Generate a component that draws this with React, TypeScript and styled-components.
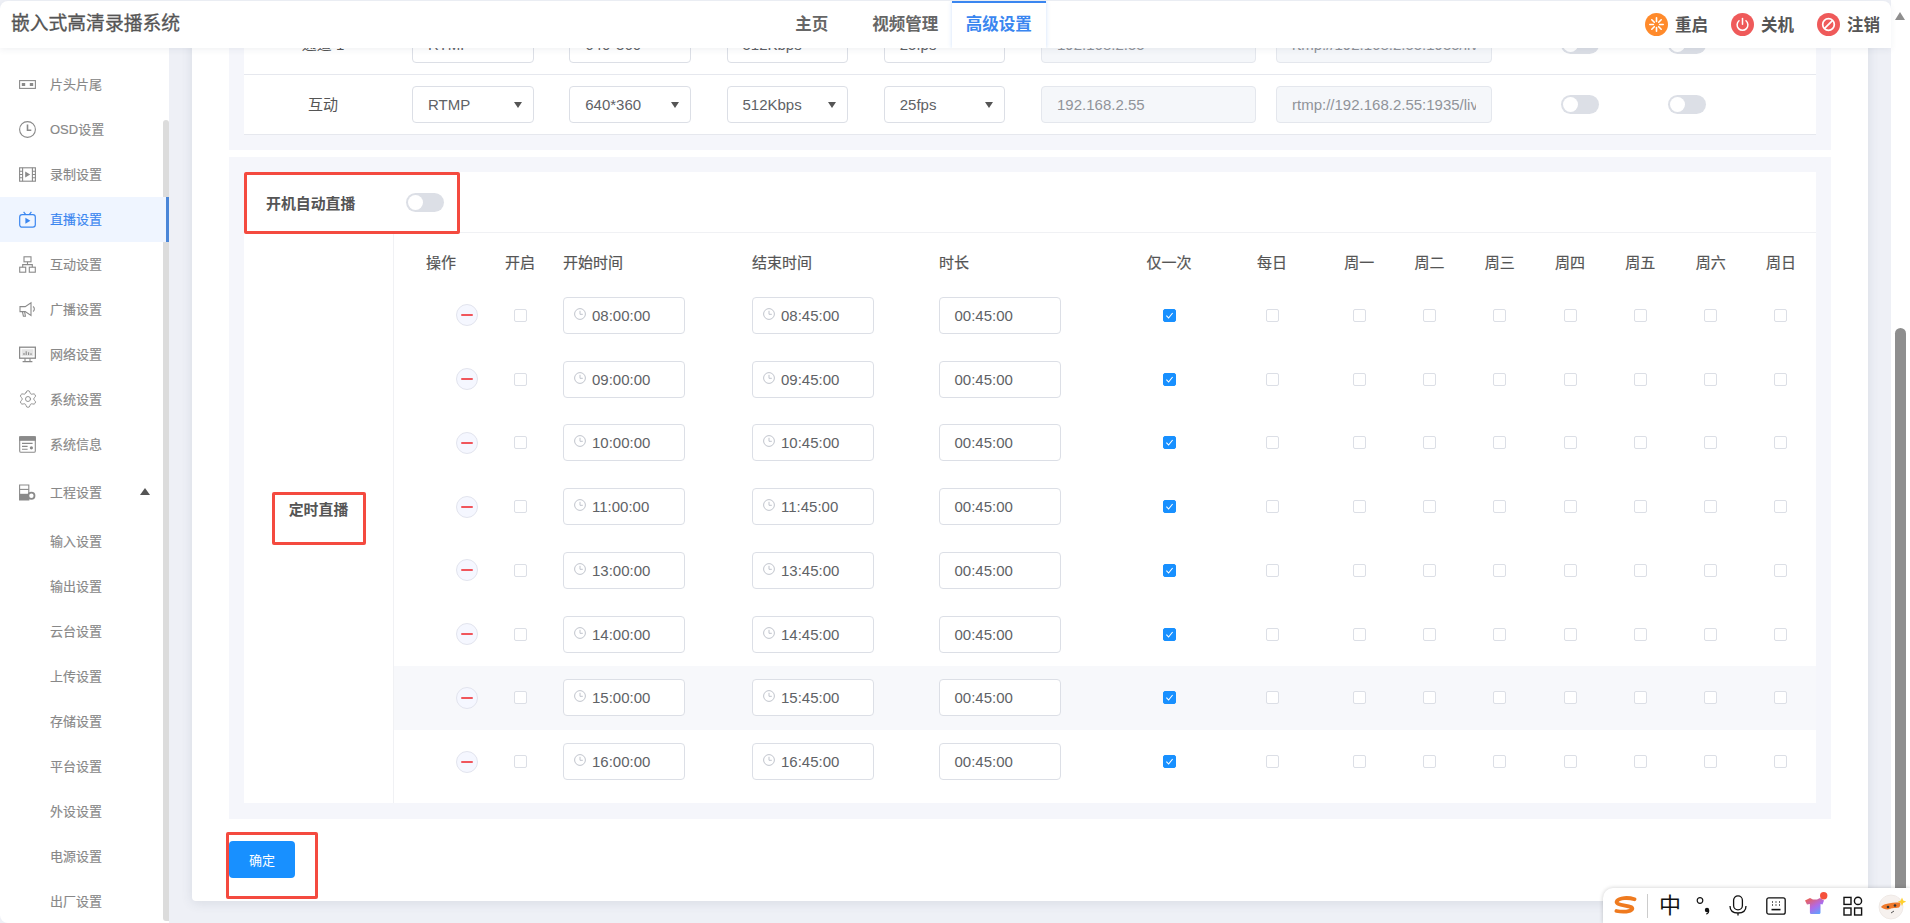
import { Settings } from 'lucide-react';
import { createGlobalStyle, styled } from 'styled-components';

const FONT = '"Liberation Sans", "Noto Sans CJK SC", sans-serif';

const GlobalStyle = createGlobalStyle`
  html, body {
    margin: 0;
    height: 100%;
    overflow: hidden;
    background: #eef0f6;
    font-family: ${FONT};
  }
  * { box-sizing: border-box; }
`;

const Page = styled.div`
  display: flex;
  height: 923px;
  overflow: hidden;
  position: relative;
`;

const Shell = styled.div`
  flex: 1;
  min-width: 0;
  display: flex;
  flex-direction: column;
`;

const PageScrollbar = styled.div`
  width: 19px;
  background: #fff;
  display: flex;
  flex-direction: column;
  padding-left: 4px;
`;

const ScrollArrow = styled.div`
  width: 0;
  height: 0;
  margin-top: 12px;
  border-left: 5.5px solid transparent;
  border-right: 5.5px solid transparent;
  border-bottom: 8px solid #8e8e8e;
`;

const ScrollThumb = styled.div`
  width: 11px;
  flex: 1;
  margin-top: 308px;
  background: #8e8e8e;
  border-radius: 6px 6px 0 0;
`;

const Header = styled.header`
  position: relative;
  z-index: 3;
  height: 47px;
  margin-top: 1px;
  flex-shrink: 0;
  display: flex;
  align-items: stretch;
  padding: 0 11px;
  background: #fff;
  border-radius: 8px 8px 0 0;
  box-shadow: 0 2px 6px rgba(60, 70, 100, 0.07);
`;

const Title = styled.h1`
  margin: 0;
  width: 754px;
  font-size: 18.8px;
  line-height: 46px;
  font-weight: 400;
  color: #555;
  white-space: nowrap;
  -webkit-text-stroke: 0.3px #555;
`;

const Nav = styled.nav`
  display: flex;
`;

const Tab = styled.a<{ $active?: boolean }>`
  width: 93.5px;
  text-align: center;
  font-size: 16.5px;
  font-weight: 700;
  line-height: 42px;
  color: ${(p) => (p.$active ? '#3a86f0' : '#666')};
  border-top: 2px solid ${(p) => (p.$active ? '#3a86f0' : 'transparent')};
  box-shadow: ${(p) => (p.$active ? '0 0 4px rgba(58, 134, 240, 0.25)' : 'none')};
  clip-path: inset(0 -6px 0 -6px);
`;

const Actions = styled.div`
  margin-left: auto;
  display: flex;
  align-items: center;
  gap: 23px;
`;

const Action = styled.a`
  display: flex;
  align-items: center;
  gap: 7px;
  font-size: 16.5px;
  font-weight: 700;
  color: #555;
`;

const ActionLabel = styled.span`
  margin-top: -2px;
`;

const Body = styled.div`
  flex: 1;
  min-height: 0;
  display: flex;
`;

const Sidebar = styled.aside`
  position: relative;
  width: 169px;
  flex-shrink: 0;
  padding-top: 13.5px;
  background: #fff;
  border-radius: 0 0 0 8px;
`;

const SidebarThumb = styled.div`
  position: absolute;
  top: 72px;
  right: 0;
  bottom: 2px;
  width: 6px;
  background: #dcdcdc;
  border-radius: 3px 3px 0 3px;
`;

const MenuItem = styled.a<{ $active?: boolean; $sub?: boolean; $tall?: boolean }>`
  position: relative;
  display: flex;
  align-items: center;
  gap: 14px;
  height: ${(p) => (p.$tall ? '52px' : '45px')};
  padding-left: ${(p) => (p.$sub ? '50px' : '19px')};
  font-size: 13px;
  color: ${(p) => (p.$active ? '#3a86f0' : '#888')};
  background: ${(p) => (p.$active ? '#eff5ff' : 'transparent')};
  border-right: ${(p) => (p.$active ? '3px solid #4a86d8' : 'none')};
  -webkit-text-stroke: 0.15px currentColor;
`;

const MenuLabel = styled.span`
  margin-top: -2px;
`;

const GearIcon = styled(Settings)`
  flex-shrink: 0;
  margin: 0 -1.5px;
`;

const MenuCaret = styled.span`
  width: 0;
  height: 0;
  margin-left: 24px;
  margin-top: -2px;
  border-left: 5px solid transparent;
  border-right: 5px solid transparent;
  border-bottom: 7px solid #555;
`;

const Main = styled.main`
  flex: 1;
  min-width: 0;
  padding: 0 23px;
  overflow: hidden;
`;

/* the page is scrolled: the first row slides under the header */
const Card = styled.section`
  margin-top: -33px;
  padding: 0 37px 23px;
  background: #fff;
  border-radius: 0 0 4px 4px;
  box-shadow: 0 2px 12px rgba(60, 70, 100, 0.12);
`;

const Panel = styled.div<{ $top: number; $bottom: number }>`
  padding: ${(p) => p.$top}px 15px ${(p) => p.$bottom}px;
  margin-bottom: 7px;
  background: #f5f6fb;
`;

const ChannelRow = styled.div`
  display: grid;
  grid-template-columns: 168px repeat(4, 157.25px) 235px 285px 107px 1fr;
  align-items: center;
  height: 60px;
  background: #fff;
  border-bottom: 1px solid #e6e8ee;
`;

const ChannelName = styled.div`
  width: 158px;
  padding-bottom: 2px;
  text-align: center;
  font-size: 15px;
  color: #555;
`;

const Select = styled.div`
  position: relative;
  width: 121.5px;
  height: 37px;
  padding-left: 15px;
  font-size: 15px;
  line-height: 35px;
  color: #606266;
  background: #fff;
  border: 1px solid #dcdfe6;
  border-radius: 4px;

  &::after {
    content: '';
    position: absolute;
    right: 11px;
    top: 15px;
    border-left: 4px solid transparent;
    border-right: 4px solid transparent;
    border-top: 6px solid #555;
  }
`;

const ReadOnlyInput = styled.input<{ $width: number }>`
  width: ${(p) => p.$width}px;
  height: 37px;
  padding: 0 15px;
  font: 15px ${FONT};
  color: #909399;
  background: #f5f7fa;
  border: 1px solid #e4e7ed;
  border-radius: 4px;
  outline: none;
`;

const Toggle = styled.span`
  position: relative;
  display: block;
  width: 38px;
  height: 19px;
  background: #dcdfe6;
  border-radius: 10px;

  &::after {
    content: '';
    position: absolute;
    left: 2px;
    top: 2px;
    width: 15px;
    height: 15px;
    background: #fff;
    border-radius: 50%;
  }
`;

const ScheduleBox = styled.div`
  background: #fff;
`;

const AutoRow = styled.div`
  height: 61px;
  border-bottom: 1px solid #f0f1f4;
`;

const AutoFrame = styled.div`
  display: flex;
  align-items: center;
  justify-content: space-between;
  position: relative;
  width: 216px;
  height: 62px;
  padding: 0 13px 1px 19px;
  font-size: 14.9px;
  font-weight: 700;
  color: #555;
  border: 3px solid #f44a3f;
  border-radius: 2px;
`;

const ScheduleBody = styled.div`
  display: flex;
`;

const ScheduleLabel = styled.div`
  width: 150px;
  flex-shrink: 0;
  display: flex;
  align-items: center;
  justify-content: center;
  padding: 2px 0 0 0;
  border-right: 1px solid #f0f1f4;
`;

const LabelFrame = styled.div`
  width: 94px;
  height: 53px;
  padding-top: 3px;
  text-align: center;
  font-size: 14.9px;
  font-weight: 700;
  line-height: 24px;
  color: #555;
  border: 3px solid #f44a3f;
  border-radius: 2px;
`;

const Table = styled.div`
  flex: 1;
  min-width: 0;
  padding-bottom: 9px;
`;

const COLUMNS = '94px 64px 189px 187px 190px 102px 104px repeat(7, 70.3px)';

const HeadRow = styled.div`
  display: grid;
  grid-template-columns: ${COLUMNS};
  align-items: center;
  height: 50.5px;
  padding-top: 6px;
`;

const HeadCell = styled.div<{ $left?: boolean }>`
  font-size: 15px;
  color: #555;
  text-align: ${(p) => (p.$left ? 'left' : 'center')};
  padding-left: ${(p) => (p.$left ? '11px' : '0')};
  -webkit-text-stroke: 0.2px #555;
`;

const TimeRow = styled.div<{ $hover?: boolean }>`
  display: grid;
  grid-template-columns: ${COLUMNS};
  align-items: center;
  justify-items: center;
  height: 63.75px;
  background: ${(p) => (p.$hover ? '#f7f8fb' : 'transparent')};
`;

const RemoveButton = styled.button`
  justify-self: start;
  display: flex;
  align-items: center;
  justify-content: center;
  width: 22px;
  height: 22px;
  margin-left: 62px;
  padding: 0;
  background: #f5f7ff;
  border: 1px solid #e2e4ee;
  border-radius: 50%;

  &::before {
    content: '';
    width: 12px;
    height: 2px;
    background: #f0565c;
    border-radius: 1px;
  }
`;

const Check = styled.span<{ $on?: boolean }>`
  display: flex;
  align-items: center;
  justify-content: center;
  width: 13px;
  height: 13px;
  background: ${(p) => (p.$on ? '#1890ff' : '#fff')};
  border: 1px solid ${(p) => (p.$on ? '#1890ff' : '#dcdfe6')};
  border-radius: 2px;
`;

const TimeField = styled.div<{ $plain?: boolean }>`
  justify-self: start;
  display: flex;
  align-items: center;
  gap: 6px;
  width: 121.5px;
  height: 37px;
  margin-left: 11px;
  padding-left: ${(p) => (p.$plain ? '14.5px' : '10px')};
  font-size: 15px;
  color: #606266;
  background: #fff;
  border: 1px solid #dcdfe6;
  border-radius: 4px;

  svg {
    margin-top: -3px;
  }
`;

const Footer = styled.div`
  padding-top: 15.5px;
`;

const SubmitWrap = styled.div`
  position: relative;
  width: 66px;
`;

const SubmitButton = styled.button`
  display: block;
  width: 66px;
  height: 37px;
  padding: 0;
  font: 13px ${FONT};
  color: #fff;
  background: #1890ff;
  border: none;
  border-radius: 4px;
`;

const Highlight = styled.div`
  position: absolute;
  left: -3px;
  top: -9px;
  width: 92px;
  height: 67px;
  border: 3px solid #f44a3f;
  border-radius: 2px;
  pointer-events: none;
`;

const ImeBar = styled.div`
  position: absolute;
  right: 0;
  bottom: 0;
  z-index: 5;
  display: grid;
  grid-template-columns: 23px 20px 26px 40px 29px 48px 32px 41px 37px;
  align-items: center;
  justify-items: center;
  width: 307px;
  height: 35px;
  padding-left: 11px;
  background: #fff;
  border-radius: 10px 0 0 0;
  box-shadow: 0 0 4px rgba(0, 0, 0, 0.2);
`;

const ImeDivider = styled.span`
  width: 1px;
  height: 24px;
  background: #ccc;
`;

const ImeChar = styled.span`
  font-size: 22px;
  line-height: 1;
  color: #111;
`;

const MENU_GREY = '#8a8a8a';

function Svg({ children, size = 17, color = MENU_GREY }: { children: React.ReactNode; size?: number; color?: string }) {
  return (
    <svg width={size} height={size} viewBox="0 0 17 17" fill="none" stroke={color} strokeWidth="1.1" style={{ flexShrink: 0 }}>
      {children}
    </svg>
  );
}

const menuIcons: Record<string, React.ReactNode> = {
  title: (
    <Svg>
      <rect x="0.6" y="4.6" width="15.8" height="7.8" />
      <rect x="2.8" y="7" width="3.4" height="3" fill={MENU_GREY} stroke="none" />
      <rect x="10.8" y="7" width="3.4" height="3" fill={MENU_GREY} stroke="none" />
    </Svg>
  ),
  osd: (
    <Svg>
      <circle cx="8.5" cy="8.5" r="7.9" />
      <path d="M8.5 3.6v5.6h3.8" strokeWidth="1.6" />
    </Svg>
  ),
  record: (
    <Svg>
      <rect x="0.6" y="1.8" width="15.8" height="13.4" />
      <path d="M3.6 1.8v13.4M13.4 1.8v13.4M0.6 5.2h3M0.6 8.5h3M0.6 11.8h3M13.4 5.2h3M13.4 8.5h3M13.4 11.8h3" />
      <path d="M6.2 5.6v5.8l5-2.9z" fill={MENU_GREY} stroke="none" />
    </Svg>
  ),
  live: (
    <Svg color="#3a86f0">
      <rect x="0.7" y="3.6" width="15.6" height="12.6" rx="2.4" strokeWidth="1.2" />
      <path d="M4.6 0.8l2 2.6M12.4 0.8l-2 2.6" strokeWidth="1.2" />
      <path d="M6.4 6.8v6l5-3z" fill="#3a86f0" stroke="none" />
    </Svg>
  ),
  interact: (
    <Svg>
      <rect x="5" y="0.8" width="7" height="5" />
      <rect x="0.7" y="11.2" width="6" height="5" />
      <rect x="10.3" y="11.2" width="6" height="5" />
      <path d="M8.5 5.8v2.8M3.7 11.2V8.6h9.6v2.6" />
    </Svg>
  ),
  broadcast: (
    <Svg>
      <path d="M1 5.6h5.2L12 1.8v12.6L6.2 10.6H1z" />
      <path d="M3.4 10.6l1 4.6h2l-.8-4.6M14 5.6c1.8 1 1.8 4 0 5" />
    </Svg>
  ),
  network: (
    <Svg>
      <rect x="0.6" y="1.2" width="15.8" height="11" strokeWidth="1.3" />
      <rect x="2.6" y="3.2" width="11.8" height="7" fill="#e4e4e4" stroke="none" />
      <path d="M5 9V7M7.2 9V5.2M9.6 9V6.2M12 9V7.2" />
      <path d="M6 12.2v3M11 12.2v3M3.6 15.6h9.8" />
    </Svg>
  ),
  info: (
    <Svg>
      <rect x="0.7" y="0.7" width="15.6" height="15.6" rx="1.4" />
      <path d="M0.7 0.7h15.6v3.6H0.7z" fill={MENU_GREY} />
      <path d="M3 7.4h10.6M3 10.4h5.6M3 13.2h5.6" />
      <circle cx="12.4" cy="11.8" r="1.6" fill={MENU_GREY} stroke="none" />
    </Svg>
  ),
  project: (
    <Svg>
      <path d="M0.6 1h9.2v15H0.6z" fill="#fff" />
      <path d="M0.6 5.4h9.2" />
      <path d="M0.6 9.8h9.2V16H0.6z" fill={MENU_GREY} stroke="none" />
      <circle cx="12.4" cy="11.8" r="3.1" fill="#fff" strokeWidth="1.8" stroke={MENU_GREY} />
    </Svg>
  ),
};

const MENU: { icon?: string; label: string; active?: boolean }[] = [
  { icon: 'title', label: '片头片尾' },
  { icon: 'osd', label: 'OSD设置' },
  { icon: 'record', label: '录制设置' },
  { icon: 'live', label: '直播设置', active: true },
  { icon: 'interact', label: '互动设置' },
  { icon: 'broadcast', label: '广播设置' },
  { icon: 'network', label: '网络设置' },
  { icon: 'gear', label: '系统设置' },
  { icon: 'info', label: '系统信息' },
];

const SUB_MENU = ['输入设置', '输出设置', '云台设置', '上传设置', '存储设置', '平台设置', '外设设置', '电源设置', '出厂设置'];

const CHANNELS = ['通道 1', '互动'];

const SCHEDULE = [
  ['08:00:00', '08:45:00'],
  ['09:00:00', '09:45:00'],
  ['10:00:00', '10:45:00'],
  ['11:00:00', '11:45:00'],
  ['13:00:00', '13:45:00'],
  ['14:00:00', '14:45:00'],
  ['15:00:00', '15:45:00'],
  ['16:00:00', '16:45:00'],
];

const DAYS = ['每日', '周一', '周二', '周三', '周四', '周五', '周六', '周日'];

function RestartIcon() {
  return (
    <svg width="23" height="23" viewBox="0 0 23 23">
      <circle cx="11.5" cy="11.5" r="11.5" fill="#ff8a2b" />
      <path
        d="M11.5 4.8v3.6M11.5 14.6v3.6M4.8 11.5h3.6M14.6 11.5h3.6M6.8 6.8l2.5 2.5M13.7 13.7l2.5 2.5M16.2 6.8l-2.5 2.5M9.3 13.7l-2.5 2.5"
        stroke="#fff"
        strokeWidth="1.6"
        strokeLinecap="round"
      />
    </svg>
  );
}

function PowerIcon() {
  return (
    <svg width="23" height="23" viewBox="0 0 23 23" fill="none">
      <circle cx="11.5" cy="11.5" r="11.5" fill="#ef5a5a" />
      <path d="M8 7.8a5.4 5.4 0 1 0 7 0" stroke="#fff" strokeWidth="1.5" strokeLinecap="round" />
      <path d="M11.5 5.6v5.6" stroke="#fff" strokeWidth="1.5" strokeLinecap="round" />
    </svg>
  );
}

function BanIcon() {
  return (
    <svg width="23" height="23" viewBox="0 0 23 23" fill="none">
      <circle cx="11.5" cy="11.5" r="11.5" fill="#ef5a5a" />
      <circle cx="11.5" cy="11.5" r="5.8" stroke="#fff" strokeWidth="1.7" />
      <path d="M7.6 15.4l7.8-7.8" stroke="#fff" strokeWidth="1.7" />
    </svg>
  );
}

function ClockIcon() {
  return (
    <svg width="12" height="12" viewBox="0 0 12 12" fill="none" stroke="#c0c4cc" strokeWidth="1">
      <circle cx="6" cy="6" r="5.4" />
      <path d="M6 2.8v3.5h2.8" />
    </svg>
  );
}

function CheckMark() {
  return (
    <svg width="9" height="9" viewBox="0 0 9 9" fill="none" stroke="#fff" strokeWidth="1.1">
      <path d="M1.4 4.6l2.2 2.4 4-5" />
    </svg>
  );
}

function ImeLogo() {
  return (
    <svg width="23" height="20" viewBox="0 0 23 20" fill="none">
      <path
        d="M20.5 3.2C14 1.2 5.5 1.6 3 5c-1.6 2.4 2 3.6 8 4.6 5 .9 8.4 1.8 7 3.8-1.6 2.2-8.4 3-15.6 1.6"
        stroke="#ef7a1f"
        strokeWidth="3.8"
        strokeLinecap="round"
      />
    </svg>
  );
}

function ImePunct() {
  return (
    <svg width="15" height="19" viewBox="0 0 15 19" fill="none">
      <circle cx="4" cy="4.5" r="2.8" stroke="#111" strokeWidth="1.2" />
      <circle cx="11" cy="14" r="2.2" fill="#111" />
      <path d="M12.8 14.4c0 1.6-.8 3-2.4 3.8" stroke="#111" strokeWidth="1.3" />
    </svg>
  );
}

function ImeMic() {
  return (
    <svg width="18" height="21" viewBox="0 0 18 21" fill="none" stroke="#111" strokeWidth="1.3">
      <rect x="4.6" y="0.8" width="8.8" height="14" rx="4.4" />
      <path d="M1 11c0 4.6 3.4 7 8 7s8-2.4 8-7M9 18v2.4" />
    </svg>
  );
}

function ImeKeyboard() {
  return (
    <svg width="20" height="18" viewBox="0 0 20 18" fill="none">
      <rect x="0.8" y="0.8" width="18.4" height="16.4" rx="2" stroke="#111" strokeWidth="1.3" />
      <path d="M6 5h1M9.5 5h1M13 5h1M6 8h1M9.5 8h1M13 8h1" stroke="#333" strokeWidth="1.3" />
      <path d="M5.5 12.6h9" stroke="#111" strokeWidth="1.6" />
    </svg>
  );
}

function ImeSkin() {
  return (
    <svg width="24" height="28" viewBox="0 0 24 28">
      <defs>
        <linearGradient id="imeShirt" x1="0.1" y1="0" x2="0.8" y2="1">
          <stop offset="0" stopColor="#f0604a" />
          <stop offset="0.55" stopColor="#b06ae8" />
          <stop offset="1" stopColor="#58a8ff" />
        </linearGradient>
      </defs>
      <path
        d="M1 8.5L6 6l3 1.5h4L16 6l4 2.5-1.5 4-2-.5v8.500c0 1-.8 1.600-1.600 1.600H7.500c-.8 0-1.600-.6-1.600-1.600V12L3 12.500z"
        fill="url(#imeShirt)"
      />
      <circle cx="19.7" cy="3.8" r="3.7" fill="#f5513c" />
    </svg>
  );
}

function ImeApps() {
  return (
    <svg width="20" height="20" viewBox="0 0 20 20" fill="none" stroke="#111" strokeWidth="1.4">
      <rect x="1" y="1.4" width="7" height="7" />
      <circle cx="15" cy="4.9" r="3.6" />
      <rect x="1" y="12" width="7" height="7" />
      <rect x="11.6" y="12" width="7" height="7" />
    </svg>
  );
}

function ImeMascot() {
  return (
    <svg width="28" height="28" viewBox="0 0 28 28">
      <circle cx="13" cy="15" r="12" fill="#f6f1ee" stroke="#ece6e2" strokeWidth="0.8" />
      <path d="M5 6l3 3M19 5l-2 4" stroke="#f6f1ee" strokeWidth="3" />
      <path d="M3 15c2-3 8-4.500 19-4.500 1 2 0 4-1 5-5 1-6 0-9 1.500-3 1-7 0-9-2z" fill="#ef7a2c" />
      <circle cx="10" cy="15" r="1.3" fill="#333" />
      <circle cx="17" cy="13.5" r="1.3" fill="#333" />
      <path d="M13 21l3-2" stroke="#555" strokeWidth="1" />
      <path d="M24 5.500l1.200 3 3 1.200-3 1.200-1.200 3-1.200-3-3-1.200 3-1.200z" fill="#ffd02e" />
    </svg>
  );
}

export default function App() {
  return (
    <>
      <GlobalStyle />
      <Page>
        <Shell>
          <Header>
            <Title>嵌入式高清录播系统</Title>
            <Nav>
              <Tab>主页</Tab>
              <Tab>视频管理</Tab>
              <Tab $active>高级设置</Tab>
            </Nav>
            <Actions>
              <Action>
                <RestartIcon />
                <ActionLabel>重启</ActionLabel>
              </Action>
              <Action>
                <PowerIcon />
                <ActionLabel>关机</ActionLabel>
              </Action>
              <Action>
                <BanIcon />
                <ActionLabel>注销</ActionLabel>
              </Action>
            </Actions>
          </Header>
          <Body>
            <Sidebar>
              <SidebarThumb />
              {MENU.map((item) => (
                <MenuItem key={item.label} $active={item.active}>
                  {item.icon === 'gear' ? (
                    <GearIcon size={20} color={MENU_GREY} strokeWidth={1.1} />
                  ) : (
                    menuIcons[item.icon ?? '']
                  )}
                  <MenuLabel>{item.label}</MenuLabel>
                </MenuItem>
              ))}
              <MenuItem $tall>
                {menuIcons.project}
                <MenuLabel>工程设置</MenuLabel>
                <MenuCaret />
              </MenuItem>
              {SUB_MENU.map((label) => (
                <MenuItem key={label} $sub>
                  <MenuLabel>{label}</MenuLabel>
                </MenuItem>
              ))}
            </Sidebar>
            <Main>
              <Card>
                <Panel $top={0} $bottom={15}>
                  {CHANNELS.map((name) => (
                    <ChannelRow key={name}>
                      <ChannelName>{name}</ChannelName>
                      <Select>RTMP</Select>
                      <Select>640*360</Select>
                      <Select>512Kbps</Select>
                      <Select>25fps</Select>
                      <ReadOnlyInput $width={215} readOnly value="192.168.2.55" />
                      <ReadOnlyInput $width={216} readOnly value="rtmp://192.168.2.55:1935/live/1" />
                      <Toggle />
                      <Toggle />
                    </ChannelRow>
                  ))}
                </Panel>
                <Panel $top={15} $bottom={16}>
                  <ScheduleBox>
                    <AutoRow>
                      <AutoFrame>
                        开机自动直播
                        <Toggle />
                      </AutoFrame>
                    </AutoRow>
                    <ScheduleBody>
                      <ScheduleLabel>
                        <LabelFrame>定时直播</LabelFrame>
                      </ScheduleLabel>
                      <Table>
                        <HeadRow>
                          <HeadCell>操作</HeadCell>
                          <HeadCell>开启</HeadCell>
                          <HeadCell $left>开始时间</HeadCell>
                          <HeadCell $left>结束时间</HeadCell>
                          <HeadCell $left>时长</HeadCell>
                          <HeadCell>仅一次</HeadCell>
                          {DAYS.map((day) => (
                            <HeadCell key={day}>{day}</HeadCell>
                          ))}
                        </HeadRow>
                        {SCHEDULE.map(([start, end]) => (
                          <TimeRow key={start} $hover={start === '15:00:00'}>
                            <RemoveButton />
                            <Check />
                            <TimeField>
                              <ClockIcon />
                              {start}
                            </TimeField>
                            <TimeField>
                              <ClockIcon />
                              {end}
                            </TimeField>
                            <TimeField $plain>00:45:00</TimeField>
                            <Check $on>
                              <CheckMark />
                            </Check>
                            {DAYS.map((day) => (
                              <Check key={day} />
                            ))}
                          </TimeRow>
                        ))}
                      </Table>
                    </ScheduleBody>
                  </ScheduleBox>
                </Panel>
                <Footer>
                  <SubmitWrap>
                    <SubmitButton>确定</SubmitButton>
                    <Highlight />
                  </SubmitWrap>
                </Footer>
              </Card>
            </Main>
          </Body>
        </Shell>
        <PageScrollbar>
          <ScrollArrow />
          <ScrollThumb />
        </PageScrollbar>
        <ImeBar>
          <ImeLogo />
          <ImeDivider />
          <ImeChar>中</ImeChar>
          <ImePunct />
          <ImeMic />
          <ImeKeyboard />
          <ImeSkin />
          <ImeApps />
          <ImeMascot />
        </ImeBar>
      </Page>
    </>
  );
}
